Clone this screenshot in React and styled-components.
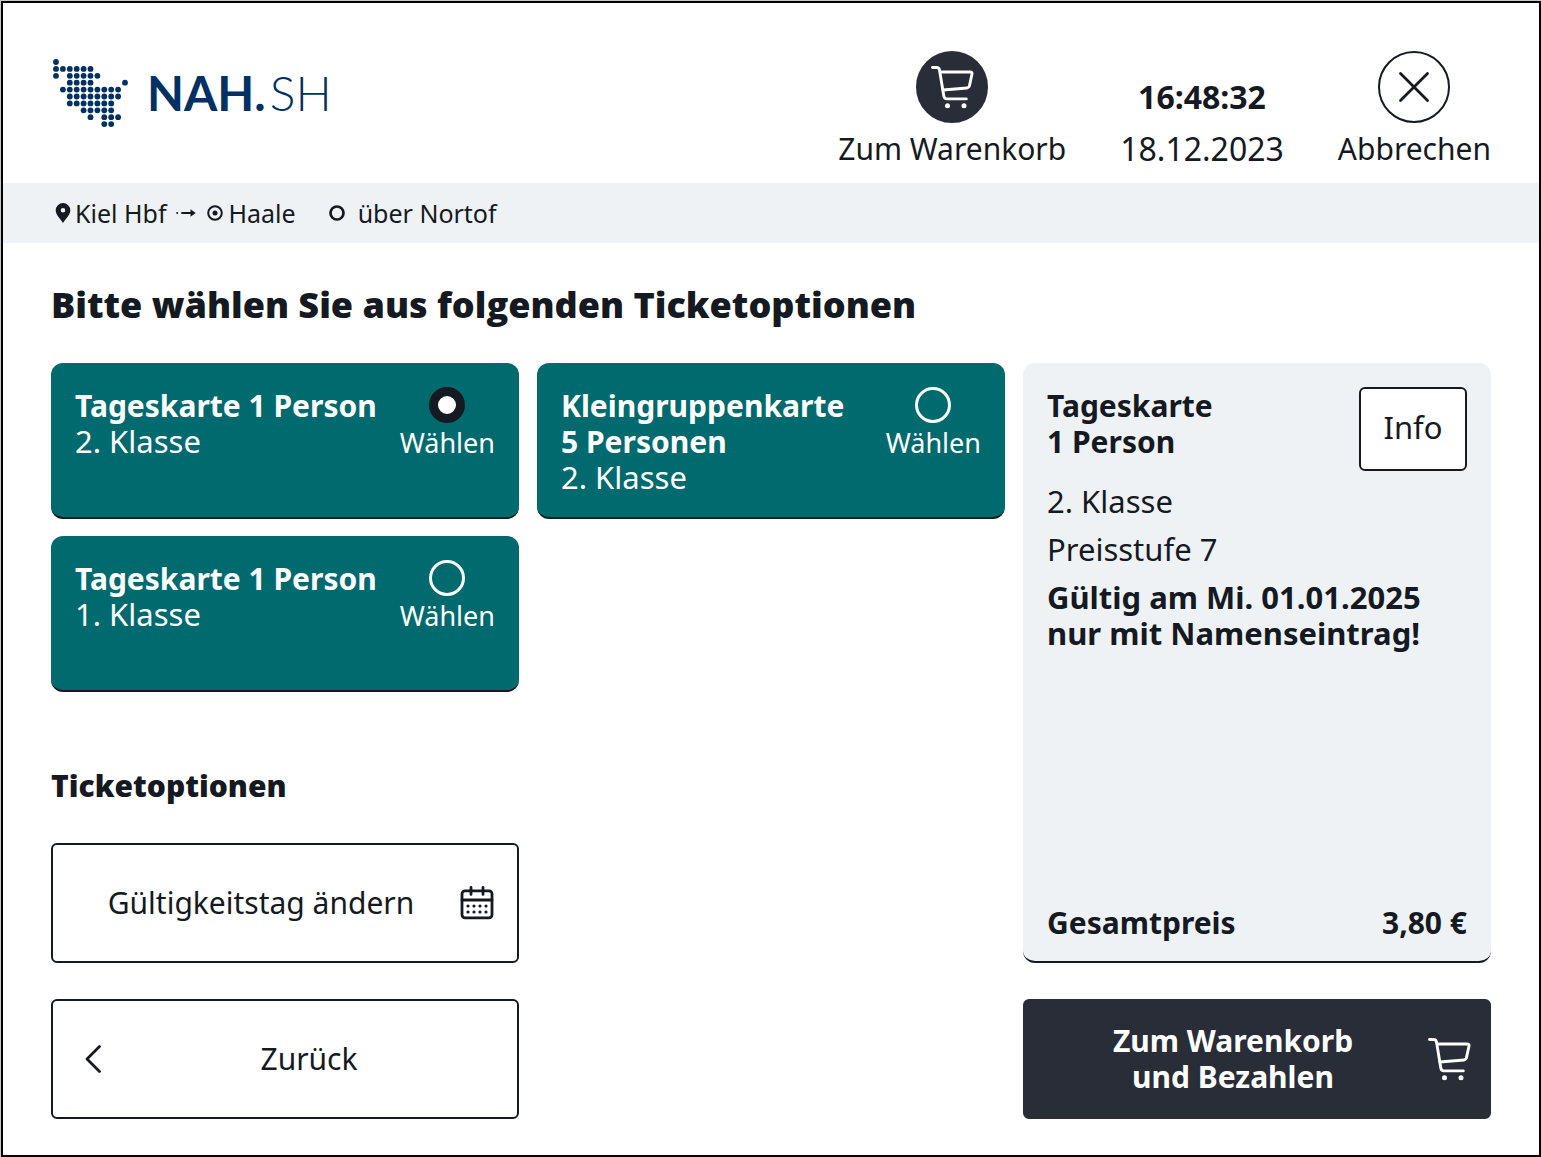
import React, { useState } from "react";
import styled, { createGlobalStyle } from "styled-components";

const ink = "#151922";
const dark = "#282d37";
const teal = "#006a6e";
const mist = "#eef2f5";
const navy = "#003064";

const GlobalStyle = createGlobalStyle`
  *, *::before, *::after { box-sizing: border-box; }
  body {
    margin: 0;
    background: #c8c8c8;
    color: ${ink};
    font-family: "Noto Sans", "Open Sans", sans-serif;
    font-size: 30px;
    line-height: 36px;
  }
  button { font: inherit; color: inherit; cursor: pointer; }
  h1, h2, h3, p, dl, dd { margin: 0; }
`;

const Page = styled.div`
  display: flex;
  min-height: 100vh;
  padding: 1px 0 0 1px;
`;

const Screen = styled.div`
  flex: 1;
  display: flex;
  flex-direction: column;
  border: 2px solid #000;
  background: #fff;
`;

const Header = styled.header`
  display: flex;
  justify-content: space-between;
  align-items: flex-start;
  padding: 48px 48px 16px;
`;

const Brand = styled.a`
  display: flex;
  align-items: center;
  gap: 18px;
  color: ${navy};
  text-decoration: none;
  padding-top: 7px;
`;

const BrandText = styled.span`
  display: flex;
  gap: 4px;
`;

const BrandName = styled.span`
  font-family: Lato, sans-serif;
  font-size: 48px;
  line-height: 68px;
  font-weight: ${(p) => (p.$light ? 300 : 700)};
`;

const HeaderActions = styled.div`
  display: flex;
  align-items: flex-end;
  gap: 54px;
`;

const HeaderButton = styled.button`
  display: flex;
  flex-direction: column;
  align-items: center;
  gap: 8px;
  padding: 0;
  border: 0;
  background: none;
`;

const Round = styled.span`
  display: grid;
  place-items: center;
  width: 72px;
  height: 72px;
  border-radius: 50%;
  border: 2px solid ${(p) => (p.$filled ? dark : ink)};
  background: ${(p) => (p.$filled ? dark : "#fff")};
  color: ${(p) => (p.$filled ? "#fff" : ink)};
`;

const Clock = styled.div`
  display: flex;
  flex-direction: column;
  align-items: center;
  gap: 16px;
  font-size: 32px;
`;

const RouteBar = styled.div`
  display: flex;
  align-items: center;
  height: 60px;
  padding: 0 48px;
  background: ${mist};
  font-size: 25px;
  line-height: 36px;
`;

const Stop = styled.span`
  display: flex;
  align-items: center;
  gap: ${(p) => (p.$via ? 12 : 4)}px;
  margin-left: ${(p) => (p.$via ? 32 : 0)}px;
`;

const ArrowBox = styled.span`
  display: flex;
  padding: 0 9px;
`;

const Main = styled.main`
  flex: 1;
  display: flex;
  flex-direction: column;
  padding: 38px 48px 36px;
`;

const Title = styled.h1`
  font-family: "Open Sans", "Noto Sans", sans-serif;
  font-size: 36px;
  line-height: 48px;
  font-weight: 800;
`;

const Columns = styled.div`
  flex: 1;
  display: grid;
  grid-template-columns: repeat(3, 1fr);
  grid-template-rows: 1fr auto;
  gap: 36px 18px;
  margin-top: 34px;
`;

const Choices = styled.div`
  grid-column: span 2;
  display: flex;
  flex-direction: column;
  justify-content: space-between;
`;

const TicketGrid = styled.fieldset`
  display: grid;
  grid-template-columns: repeat(2, 1fr);
  gap: 17px 18px;
  margin: 0;
  padding: 0;
  border: 0;
`;

const TicketCard = styled.label`
  display: flex;
  justify-content: space-between;
  min-height: 156px;
  padding: 24px 24px 20px;
  border-radius: 12px;
  border-bottom: 2px solid ${ink};
  background: ${teal};
  color: #fff;
  cursor: pointer;
`;

const TicketText = styled.span`
  display: flex;
  flex-direction: column;
  padding-top: 1px;
  white-space: pre-line;
`;

const TravelClass = styled.span`
  font-size: 31px;
  line-height: 34px;
`;

const Strong = styled.strong`
  font-weight: 700;
  line-height: 36px;
`;

const Pick = styled.span`
  display: flex;
  flex-direction: column;
  align-items: center;
  gap: 2px;
  font-size: 27px;
`;

const Radio = styled.input`
  appearance: none;
  width: 36px;
  height: 36px;
  margin: 0;
  border: 3px solid #fff;
  border-radius: 50%;
  background: transparent;
  &:checked {
    border: 9px solid ${ink};
    background: #fff;
  }
`;

const Options = styled.section`
  display: grid;
  grid-template-columns: repeat(2, 1fr);
  column-gap: 18px;
`;

const OptionsTitle = styled.h2`
  grid-column: 1 / -1;
  margin-bottom: 38px;
  font-family: "Open Sans", "Noto Sans", sans-serif;
  font-size: 30px;
  line-height: 38px;
  font-weight: 800;
`;

const WideButton = styled.button`
  display: grid;
  grid-template-columns: ${(p) => (p.$back ? "36px 1fr" : "1fr 36px")};
  align-items: center;
  justify-items: center;
  gap: 12px;
  height: 120px;
  padding: 0 22px;
  border: 2px solid ${(p) => (p.$dark ? dark : ink)};
  border-radius: 6px;
  background: ${(p) => (p.$dark ? dark : "#fff")};
  color: ${(p) => (p.$dark ? "#fff" : ink)};
  font-weight: ${(p) => (p.$dark ? 700 : 400)};
`;

const PayButton = styled(WideButton)`
  grid-column: 3;
`;

const ButtonText = styled.span`
  white-space: pre-line;
  text-align: center;
`;

const Summary = styled.aside`
  display: flex;
  flex-direction: column;
  justify-content: space-between;
  padding: 24px 24px 20px;
  border-bottom: 2px solid ${ink};
  border-radius: 12px;
  background: ${mist};
`;

const SummaryHead = styled.div`
  display: flex;
  justify-content: space-between;
  align-items: flex-start;
`;

const SummaryTitle = styled.h3`
  padding-top: 1px;
  font-size: 30px;
  line-height: 36px;
  font-weight: 700;
  white-space: pre-line;
`;

const InfoButton = styled.button`
  height: 84px;
  width: 108px;
  padding: 0 0 4px;
  border: 2px solid ${ink};
  border-radius: 6px;
  background: #fff;
  font-size: 31px;
`;

const Details = styled.div`
  display: flex;
  flex-direction: column;
  gap: 12px;
  margin-top: 12px;
  font-size: 31px;
`;

const Total = styled.dl`
  display: flex;
  justify-content: space-between;
  font-weight: 700;
`;

const DOTS = [
  [0, [0]],
  [1, [0, 1, 2, 3, 4, 5]],
  [2, [0, 2, 3, 4, 5, 6]],
  [3, [2, 3, 4, 5, 10]],
  [4, [1, 2, 3, 4, 5, 6, 7, 8, 9]],
  [5, [2, 3, 4, 5, 6, 7, 8, 9]],
  [6, [2, 3, 4, 5, 6, 7, 8]],
  [7, [4, 5, 6, 7, 8]],
  [8, [5, 7, 8, 9]],
  [9, [7, 8]],
];

const LogoMark = () => (
  <svg width="78" height="70" viewBox="0 0 78 70" fill={navy} aria-hidden="true">
    {DOTS.flatMap(([row, cols]) =>
      cols.map((col) => (
        <circle key={`${row}-${col}`} cx={5 + col * 6.9} cy={4 + row * 6.9} r="2.9" />
      ))
    )}
  </svg>
);

const CartIcon = () => (
  <svg width="48" height="48" viewBox="0 0 48 48" fill="none" stroke="currentColor" strokeWidth="2.9" strokeLinecap="round" strokeLinejoin="round" aria-hidden="true">
    <path d="M4.500 4.500h4.200q2.300 0 2.800 2.600l4.300 26q.5 2.800 3 2.800h19.500" />
    <path d="M12.200 9h30q2.200 0 1.800 2l-2.600 12q-.4 1.800-2.400 2L15 27" />
    <circle cx="19.500" cy="42.800" r="2.500" fill="currentColor" stroke="none" />
    <circle cx="36" cy="42.800" r="2.500" fill="currentColor" stroke="none" />
  </svg>
);

const CloseIcon = () => (
  <svg width="36" height="36" viewBox="0 0 36 36" fill="none" stroke="currentColor" strokeWidth="2.8" strokeLinecap="round" aria-hidden="true">
    <path d="M4.500 4.500l27 27M31.500 4.500l-27 27" />
  </svg>
);

const PinIcon = () => (
  <svg width="20" height="24" viewBox="0 0 20 24" aria-hidden="true">
    <path fillRule="evenodd" fill={ink} d="M12 2a7.300 7.300 0 0 0-7.300 7.300c0 4.200 3.600 7.400 7.300 12.700 3.700-5.300 7.300-8.500 7.300-12.700A7.300 7.300 0 0 0 12 2zm0 4.900a2.300 2.300 0 1 1 0 4.600 2.300 2.300 0 0 1 0-4.600z" />
  </svg>
);

const ArrowIcon = () => (
  <svg width="22" height="16" viewBox="0 0 22 16" fill={ink} aria-hidden="true">
    <circle cx="2.200" cy="8" r="1" />
    <path d="M7 8h9" stroke={ink} strokeWidth="1.900" strokeLinecap="round" />
    <path d="M15.500 4.200l5.200 3.800-5.200 3.800z" />
  </svg>
);

const StationIcon = ({ dot }) => (
  <svg width="18" height="18" viewBox="0 0 18 18" fill="none" stroke={ink} aria-hidden="true">
    <circle cx="9" cy="9" r={dot ? 6.8 : 6.5} strokeWidth={dot ? 2 : 2.7} />
    {dot && <circle cx="9" cy="9" r="2.500" fill={ink} stroke="none" />}
  </svg>
);

const CalendarIcon = () => (
  <svg width="36" height="36" viewBox="0 0 36 36" fill="none" stroke="currentColor" strokeWidth="2.800" strokeLinecap="round" aria-hidden="true">
    <rect x="3" y="5.800" width="30" height="27" rx="3" />
    <path d="M3 15h30M12 2.400v7M24 2.400v7" />
    {[21, 27].map((y) =>
      [9, 15, 21, 27].map((x) => (
        <circle key={`${x}-${y}`} cx={x} cy={y} r="1.600" fill="currentColor" stroke="none" />
      ))
    )}
  </svg>
);

const BackIcon = () => (
  <svg width="36" height="36" viewBox="0 0 36 36" fill="none" stroke="currentColor" strokeWidth="2.800" strokeLinecap="round" strokeLinejoin="round" aria-hidden="true">
    <path d="M24.500 5.500L12 18l12.500 12.500" />
  </svg>
);

const TICKETS = [
  { id: "tag-2", title: "Tageskarte 1 Person", travelClass: "2. Klasse" },
  { id: "gruppe-2", title: "Kleingruppenkarte\n5 Personen", travelClass: "2. Klasse" },
  { id: "tag-1", title: "Tageskarte 1 Person", travelClass: "1. Klasse" },
];

export default function App() {
  const [selected, setSelected] = useState("tag-2");
  return (
    <Page>
      <GlobalStyle />
      <Screen>
        <Header>
          <Brand href="#">
            <LogoMark />
            <BrandText>
              <BrandName>NAH.</BrandName>
              <BrandName $light>SH</BrandName>
            </BrandText>
          </Brand>
          <HeaderActions>
            <HeaderButton type="button">
              <Round $filled><CartIcon /></Round>
              Zum Warenkorb
            </HeaderButton>
            <Clock>
              <Strong>16:48:32</Strong>
              <span>18.12.2023</span>
            </Clock>
            <HeaderButton type="button">
              <Round><CloseIcon /></Round>
              Abbrechen
            </HeaderButton>
          </HeaderActions>
        </Header>
        <RouteBar>
          <Stop><PinIcon />Kiel Hbf</Stop>
          <ArrowBox><ArrowIcon /></ArrowBox>
          <Stop><StationIcon dot />Haale</Stop>
          <Stop $via><StationIcon />über Nortof</Stop>
        </RouteBar>
        <Main>
          <Title>Bitte wählen Sie aus folgenden Ticketoptionen</Title>
          <Columns>
            <Choices>
              <TicketGrid>
                {TICKETS.map((t) => (
                  <TicketCard key={t.id}>
                    <TicketText>
                      <Strong>{t.title}</Strong>
                      <TravelClass>{t.travelClass}</TravelClass>
                    </TicketText>
                    <Pick>
                      <Radio type="radio" name="ticket" checked={selected === t.id} onChange={() => setSelected(t.id)} />
                      Wählen
                    </Pick>
                  </TicketCard>
                ))}
              </TicketGrid>
              <Options>
                <OptionsTitle>Ticketoptionen</OptionsTitle>
                <WideButton type="button">
                  <ButtonText>Gültigkeitstag ändern</ButtonText>
                  <CalendarIcon />
                </WideButton>
              </Options>
            </Choices>
            <Summary>
              <div>
                <SummaryHead>
                  <SummaryTitle>{"Tageskarte\n1 Person"}</SummaryTitle>
                  <InfoButton type="button">Info</InfoButton>
                </SummaryHead>
                <Details>
                  <p>2. Klasse</p>
                  <p>Preisstufe 7</p>
                  <Strong as="p">Gültig am Mi. 01.01.2025<br />nur mit Namenseintrag!</Strong>
                </Details>
              </div>
              <Total>
                <dt>Gesamtpreis</dt>
                <dd>3,80 €</dd>
              </Total>
            </Summary>
            <WideButton type="button" $back>
              <BackIcon />
              <ButtonText>Zurück</ButtonText>
            </WideButton>
            <PayButton type="button" $dark>
              <ButtonText>{"Zum Warenkorb\nund Bezahlen"}</ButtonText>
              <CartIcon />
            </PayButton>
          </Columns>
        </Main>
      </Screen>
    </Page>
  );
}
